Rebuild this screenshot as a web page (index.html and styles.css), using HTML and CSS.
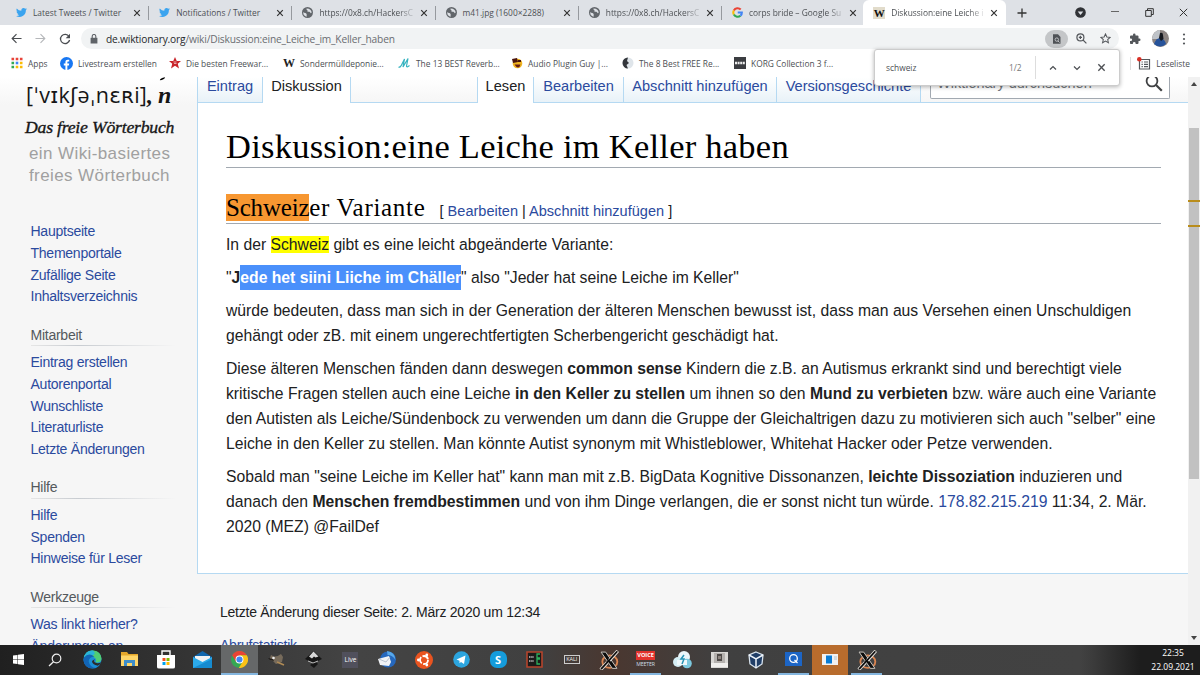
FILE: index.html
```html
<!DOCTYPE html>
<html lang="de">
<head>
<meta charset="utf-8">
<title>Diskussion:eine Leiche im Keller haben</title>
<link rel="stylesheet" href="styles.css">
</head>
<body>
<svg class="defs" width="0" height="0">
  <symbol id="bird" viewBox="0 0 24 24"><path fill="#3ba4ef" d="M24 4.6a10 10 0 0 1-2.8.8 5 5 0 0 0 2.1-2.7 10 10 0 0 1-3.1 1.2 4.9 4.9 0 0 0-8.4 4.5A14 14 0 0 1 1.7 3.2a4.9 4.9 0 0 0 1.5 6.5 5 5 0 0 1-2.2-.6 4.9 4.9 0 0 0 3.9 4.9 5 5 0 0 1-2.2.1 4.9 4.9 0 0 0 4.6 3.4A9.900 9.900 0 0 1 0 19.500 14 14 0 0 0 21.500 7a10 10 0 0 0 2.500-2.400z"/></symbol>
  <symbol id="globe" viewBox="0 0 24 24"><circle cx="12" cy="12" r="12" fill="#62666b"/><path fill="#dee1e6" d="M3 11c2 3 6 1 7 4s-1 4 1 6c-5 0-9-4-8-10zM10 3c-1 3 1 3 2 4s-2 2 0 3 5-1 6 2 2 1 3 0c0-5-4-9-11-9z"/></symbol>
  <symbol id="x" viewBox="0 0 10 10"><path d="M1.500 1.500l7 7M8.500 1.500l-7 7" fill="none" stroke="currentColor" stroke-width="1.500"/></symbol>
  <symbol id="xorg" viewBox="0 0 24 24"><ellipse cx="13" cy="14" rx="9" ry="7.500" fill="none" stroke="#d98450" stroke-width="2.200"/><path d="M2.500 2.500h5.500L21.500 22H16z" fill="#0c0c0c" stroke="#c8c4be" stroke-width="1.200"/><path d="M22.500 1L12.500 12.500M10 15L2 23.500" stroke="#e6e2dc" stroke-width="4"/><path d="M22 1.500L2.500 23" stroke="#0c0c0c" stroke-width="2"/></symbol>
</svg>

<header class="tabstrip">
  <div class="tab"><svg class="fav"><use href="#bird"/></svg><span class="t1">Latest Tweets / Twitter</span><svg class="close"><use href="#x"/></svg></div>
  <div class="tab"><svg class="fav"><use href="#bird"/></svg><span>Notifications / Twitter</span><svg class="close"><use href="#x"/></svg></div>
  <div class="tab"><svg class="fav"><use href="#globe"/></svg><span class="fade">https://0x8.ch/HackersC</span><svg class="close"><use href="#x"/></svg></div>
  <div class="tab"><svg class="fav"><use href="#globe"/></svg><span>m41.jpg (1600×2288)</span><svg class="close"><use href="#x"/></svg></div>
  <div class="tab"><svg class="fav"><use href="#globe"/></svg><span class="fade">https://0x8.ch/HackersC</span><svg class="close"><use href="#x"/></svg></div>
  <div class="tab last"><svg class="fav" viewBox="0 0 24 24"><g fill="none" stroke-width="4.500"><path d="M19 5.500A9.500 9.500 0 0 0 4 7.500" stroke="#ea4335"/><path d="M4 7.500a9.500 9.500 0 0 0 0 9" stroke="#fbbc05"/><path d="M4 16.500a9.500 9.500 0 0 0 14.500 2.500" stroke="#34a853"/><path d="M18.500 19a9 9 0 0 0 3-7h-9" stroke="#4285f4"/></g></svg><span class="fade">corps bride – Google Su</span><svg class="close"><use href="#x"/></svg></div>
  <div class="tab active"><b class="wfav">W</b><span class="fade">Diskussion:eine Leiche i</span><svg class="close"><use href="#x"/></svg></div>
  <svg class="plus" viewBox="0 0 10 10"><path d="M5 .5v9M.5 5h9" stroke="#333" stroke-width="1.300"/></svg>
  <div class="wincontrols">
    <svg width="11" height="11" viewBox="0 0 12 12"><circle cx="6" cy="6" r="5.800" fill="#303236"/><path d="M3 4.800h6L6 8.600z" fill="#dee1e6"/></svg>
    <svg width="9" height="11" viewBox="0 0 9 11"><path d="M0 4.500h8" stroke="#666"/></svg>
    <svg width="9" height="9" viewBox="0 0 9 9"><path d="M.7 2.500h5.600v5.800H.7zM2.500 2.500V.7h5.800v5.800h-2" fill="none" stroke="#333"/></svg>
    <svg width="9" height="9" viewBox="0 0 9 9"><path d="M.8.8l7.400 7.400M8.200.8L.8 8.200" stroke="#333"/></svg>
  </div>
</header>

<div class="toolbar">
  <div class="navbtns">
    <svg width="11" height="11" viewBox="0 0 12 12"><path d="M11.500 6H1.500M6 1.300L1.300 6 6 10.700" fill="none" stroke="#4a4d51" stroke-width="1.300"/></svg>
    <svg width="11" height="11" viewBox="0 0 12 12"><path d="M.5 6h10M6 1.300L10.700 6 6 10.700" fill="none" stroke="#b5b7ba" stroke-width="1.200"/></svg>
    <svg width="12" height="12" viewBox="0 0 12 12"><path d="M10 3.500A4.600 4.600 0 1 0 10.600 7" fill="none" stroke="#4a4d51" stroke-width="1.300"/><path d="M11 .8v4.400H6.700z" fill="#4a4d51"/></svg>
  </div>
  <div class="omnibox">
    <svg width="8" height="10" viewBox="0 0 8 10"><path d="M.6 3.800h6.800V9.500H.6z" fill="#5f6368"/><path d="M2.200 4V2.300a1.800 1.800 0 0 1 3.600 0V4" fill="none" stroke="#5f6368" stroke-width="1.100"/></svg>
    <span class="url"><b>de.wiktionary.org</b>/wiki/Diskussion:eine_Leiche_im_Keller_haben</span>
    <div class="omniicons">
      <i class="findpill"><svg width="9" height="10" viewBox="0 0 9 10"><path d="M1 .3h5L8.500 3v6.700H1z" fill="#4f5256"/><circle cx="4.800" cy="5.600" r="1.700" fill="none" stroke="#bdbfc2"/><path d="M6 7l1.500 1.500" stroke="#bdbfc2"/></svg></i>
      <svg width="11" height="11" viewBox="0 0 11 11"><g fill="none" stroke="#55585c" stroke-width="1.200"><circle cx="4.400" cy="4.400" r="3.500"/><path d="M7 7l3.400 3.400M2.800 4.400H6M4.400 2.800V6"/></g></svg>
      <svg width="11" height="11" viewBox="0 0 12 12"><path d="M6 1l1.500 3.300 3.600.4-2.700 2.400.8 3.600L6 8.900l-3.200 1.800.8-3.600L.9 4.700l3.600-.4z" fill="none" stroke="#55585c" stroke-width="1.100"/></svg>
    </div>
  </div>
  <svg class="puzzle" width="12" height="12" viewBox="0 0 24 24"><path fill="#54575b" d="M20.500 11H19V7a2 2 0 0 0-2-2h-4V3.500a2.500 2.500 0 0 0-5 0V5H4a2 2 0 0 0-2 2v3.800h1.500a2.700 2.700 0 0 1 0 5.400H2V20c0 1.100.9 2 2 2h3.800v-1.500a2.700 2.700 0 0 1 5.400 0V22H17a2 2 0 0 0 2-2v-4h1.500a2.500 2.500 0 0 0 0-5z"/></svg>
  <svg class="avatar" width="17" height="17" viewBox="0 0 17 17"><circle cx="8.500" cy="8.500" r="8.500" fill="#8d8582"/><path d="M1 5Q4 0 8 0v9H0z" fill="#bfc3c8"/><path d="M2 14q2-6 6-6 5 1 6 6-6 5-12 0z" fill="#27539a"/><path d="M8 3q3-1 3 2l.5 4-2.500 2-2-3z" fill="#17191f"/></svg>
  <svg class="dots" width="4" height="12" viewBox="0 0 4 12"><g fill="#54575b"><circle cx="2" cy="1.500" r="1.100"/><circle cx="2" cy="6" r="1.100"/><circle cx="2" cy="10.500" r="1.100"/></g></svg>
</div>

<nav class="bookmarks">
  <a class="k1"><svg width="12" height="12" viewBox="0 0 12 12"><path d="M.5.700h2.600v2.600H.5zM4.700.700h2.600v2.600H4.700zM8.900.700h2.600v2.600H8.900z" fill="#e8443a"/><path d="M.5 4.700h2.600v2.600H.5zM.5 8.700h2.600v2.600H.5z" fill="#34a853"/><path d="M4.700 4.700h2.600v2.600H4.700z" fill="#4285f4"/><path d="M8.900 4.700h2.600v2.600H8.900zM4.700 8.700h2.600v2.600H4.700zM8.900 8.700h2.600v2.600H8.900z" fill="#fbbc05"/></svg>Apps</a>
  <a class="k2"><svg width="13" height="13" viewBox="0 0 24 24"><circle cx="12" cy="12" r="12" fill="#1877f2"/><path fill="#fff" d="M10 24v-8.500H7V12h3V9.400C10 6.400 11.800 5 14.300 5l2.700.2v3h-1.500c-1.500 0-1.900.8-1.900 1.700V12H17l-.6 3.500h-2.800V24z"/></svg>Livestream erstellen</a>
  <a class="k3"><svg width="12" height="12" viewBox="0 0 24 24"><path fill="#c9252b" d="M12 0l3.500 8H24l-6.500 5.500L20 23l-8-5.500L4 23l2.500-9.500L0 8h8.500z"/><path d="M9 10h6M10 13h5" stroke="#fff" stroke-width="1.200"/></svg>Die besten Freewar...</a>
  <a class="k4"><b class="serifw">W</b>Sondermülldeponie...</a>
  <a class="k5"><svg width="13" height="13" viewBox="0 0 13 13"><path d="M.5 10q2 1 4-4l2-4-1.500 8L10 1.500 8.500 9q0 2 3-.5" fill="none" stroke="#37b3c0" stroke-width="1.200"/></svg>The 13 BEST Reverb...</a>
  <a class="k6"><svg width="12" height="12" viewBox="0 0 12 12"><circle cx="6.500" cy="6.500" r="4.800" fill="#efb321"/><path d="M1 2l5-1 1 4-5 1zM7 3h3v2H7z" fill="#4a150d"/><path d="M3.500 7.500h6q-1 4-4 2.500z" fill="#681c14"/></svg>Audio Plugin Guy |...</a>
  <a class="k7"><svg width="12" height="12" viewBox="0 0 12 12"><circle cx="6" cy="6" r="5.500" fill="#dfe5ea"/><path d="M6 .5a5.500 5.500 0 0 0 0 11L4.500 8 7 6 5 4z" fill="#33363b"/></svg>The 8 Best FREE Re...</a>
  <a class="k8"><svg width="12" height="12" viewBox="0 0 12 12"><path d="M0 0h12v12H0z" fill="#3b3d41"/><path d="M1 6h10" stroke="#eee" stroke-width="2.400" stroke-dasharray="2 .6"/></svg>KORG Collection 3 f...</a>
  <a class="reading"><svg width="14" height="13" viewBox="0 0 14 13"><path d="M2.500 2.500h10v9.500h-10z" fill="none" stroke="#55585c" stroke-width="1.200"/><path d="M4.500 5h1.300M7 5h4M4.500 7.300h1.300M7 7.300h4M4.500 9.600h1.300M7 9.600h4" stroke="#55585c" stroke-width="1.200"/><circle cx="2.300" cy="2.300" r="2.300" fill="#d93025"/></svg>Leseliste</a>
</nav>

<main class="page">
  <aside class="side">
    <div class="logo">
      <svg class="stroke" width="7" height="4" viewBox="0 0 8 4"><path d="M1 3.500Q1 1 7 0 6 3 1 3.500z"/></svg>
      <div class="ipa">[ˈvɪkʃəˌnɛʀi]<i>, n</i></div>
      <div class="motto">Das freie Wörterbuch</div>
      <div class="sub">ein Wiki-basiertes<br><span>freies Wörterbuch</span></div>
    </div>
    <ul class="first"><li>Hauptseite</li><li>Themenportale</li><li>Zufällige Seite</li><li>Inhaltsverzeichnis</li></ul>
    <h3>Mitarbeit</h3>
    <ul><li>Eintrag erstellen</li><li>Autorenportal</li><li>Wunschliste</li><li>Literaturliste</li><li>Letzte Änderungen</li></ul>
    <h3>Hilfe</h3>
    <ul><li>Hilfe</li><li>Spenden</li><li>Hinweise für Leser</li></ul>
    <h3>Werkzeuge</h3>
    <ul><li>Was linkt hierher?</li><li>Änderungen an</li></ul>
  </aside>
  <section class="main">
    <div class="ptabs">
      <div class="pt w1">Eintrag</div><div class="pt on w2">Diskussion</div><div class="gap"></div>
      <div class="pt on w3">Lesen</div><div class="pt w4">Bearbeiten</div><div class="pt w5">Abschnitt hinzufügen</div><div class="pt w6">Versionsgeschichte</div>
      <div class="searcharea"><div class="search"><span>Wiktionary durchsuchen</span><svg width="18" height="18" viewBox="0 0 18 18"><circle cx="7" cy="7" r="5.400" fill="none" stroke="#404244" stroke-width="1.800"/><path d="M11 11l5.800 5.800" stroke="#404244" stroke-width="2.200"/></svg></div></div>
    </div>
    <article class="content">
      <h1>Diskussion:eine Leiche im Keller haben</h1>
      <h2><span class="head"><mark class="cur">Schweiz</mark>er Variante</span><span class="edit">[ <a>Bearbeiten</a> | <a>Abschnitt hinzufügen</a> ]</span></h2>
      <p>In der <mark>Schweiz</mark> gibt es eine leicht abgeänderte Variante:</p>
      <p>"<b>J<span class="sel">ede het siini Liiche im Chäller</span></b>" also "Jeder hat seine Leiche im Keller"</p>
      <p>würde bedeuten, dass man sich in der Generation der älteren Menschen bewusst ist, dass man aus Versehen einen Unschuldigen<br>gehängt oder zB. mit einem ungerechtfertigten Scherbengericht geschädigt hat.</p>
      <p>Diese älteren Menschen fänden dann deswegen <b>common sense</b> Kindern die z.B. an Autismus erkrankt sind und berechtigt viele<br>kritische Fragen stellen auch eine Leiche <b>in den Keller zu stellen</b> um ihnen so den <b>Mund zu verbieten</b> bzw. wäre auch eine Variante<br>den Autisten als Leiche/Sündenbock zu verwenden um dann die Gruppe der Gleichaltrigen dazu zu motivieren sich auch "selber" eine<br>Leiche in den Keller zu stellen. Man könnte Autist synonym mit Whistleblower, Whitehat Hacker oder Petze verwenden.</p>
      <p>Sobald man "seine Leiche im Keller hat" kann man mit z.B. BigData Kognitive Dissonanzen, <b>leichte Dissoziation</b> induzieren und<br>danach den <b>Menschen fremdbestimmen</b> und von ihm Dinge verlangen, die er sonst nicht tun würde. <a>178.82.215.219</a> 11:34, 2. Mär.<br>2020 (MEZ) @FailDef</p>
    </article>
    <footer>Letzte Änderung dieser Seite: 2. März 2020 um 12:34<a>Abrufstatistik</a></footer>
  </section>
  <div class="scroll">
    <svg width="6" height="4" viewBox="0 0 6 4"><path d="M0 4l3-4 3 4z" fill="#444"/></svg>
    <div class="thumb"><i></i><i></i></div>
    <svg width="6" height="4" viewBox="0 0 6 4"><path d="M0 0l3 4 3-4z" fill="#444"/></svg>
  </div>
</main>

<div class="find">
  <span class="q">schweiz</span><span class="count">1/2</span>
  <svg width="8" height="8" viewBox="0 0 8 8"><path d="M1 5.500l3-3 3 3" fill="none" stroke="#4a4d51" stroke-width="1.200"/></svg>
  <svg width="8" height="8" viewBox="0 0 8 8"><path d="M1 2.500l3 3 3-3" fill="none" stroke="#4a4d51" stroke-width="1.200"/></svg>
  <svg width="9" height="9"><use href="#x"/></svg>
</div>

<div class="taskbar">
  <div class="apps">
    <i><svg width="11" height="11" viewBox="0 0 11 11"><path fill="#fff" d="M0 1.500l4.500-.6v4.300H0zM5 .8l6-.8v5.200H5zM0 5.800h4.500v4.300L0 9.500zM5 5.800h6V11l-6-.8z"/></svg></i>
    <i><svg width="14" height="14" viewBox="0 0 14 14"><circle cx="8.500" cy="5.500" r="4.300" fill="none" stroke="#eee" stroke-width="1.200"/><path d="M5.500 8.700L1 13" stroke="#eee" stroke-width="1.300"/></svg></i>
    <i><svg width="19" height="19" viewBox="0 0 20 20"><circle cx="10" cy="10" r="9.500" fill="#1b8fd6"/><path d="M1 8Q3 0 11 .500q8 1 8.500 8.500-.5 5-6.500 4 2-3-1-5-5-3-11 0z" fill="#4fce75"/><path d="M1 8Q3 0 10 .5q4 2 1 5-6-1-10 2.500z" fill="#2ab5d9"/><path d="M1 8q5-6 11-1-6 0-6 5 1 6 8 7Q2 21 .500 11z" fill="#1265b6"/><path d="M12.500 9.500q-2 3 1 4 3 1 6-1-1 3-4 4-6-1-6-5z" fill="#2b2b2c"/></svg></i>
    <i><svg width="17" height="15" viewBox="0 0 17 15"><path d="M0 0h6l1.500 2H17v12H0z" fill="#e5a72b"/><path d="M0 3.500h17V14H0z" fill="#ffd669"/><path d="M3 8h11v6h-3v-3H6v3H3z" fill="#3f8ec9"/></svg></i>
    <i><svg width="18" height="19" viewBox="0 0 18 19"><path d="M5 6V1h8v5" fill="none" stroke="#fff" stroke-width="1.400"/><path d="M0 5h18v12q0 1.500-2 1.500H2Q0 18.500 0 17z" fill="#fff"/><path d="M5.500 8h3v3h-3z" fill="#f25022"/><path d="M9.500 8h3v3h-3z" fill="#7fba00"/><path d="M5.500 12h3v3h-3z" fill="#00a4ef"/><path d="M9.500 12h3v3h-3z" fill="#ffb900"/></svg></i>
    <i><svg width="19" height="17" viewBox="0 0 19 17"><path d="M0 6l9.500-6L19 6v11H0z" fill="#1267ad"/><path d="M2 5h15v6H2z" fill="#f2f2f2"/><path d="M0 6l9.500 5L19 6v11H0z" fill="#2caaea"/><path d="M0 17l19-9v9z" fill="#168bd0"/></svg></i>
    <i class="focus"><svg width="17" height="17" viewBox="0 0 24 24"><circle cx="12" cy="12" r="12" fill="#34a853"/><path d="M1.600 6A12 12 0 0 1 22.400 6H12v6z" fill="#ea4335"/><path d="M22.400 6A12 12 0 0 1 11 24l6-10-5-8z" fill="#fbc116"/><path d="M1.600 6L7 15l5-9z" fill="#ea4335"/><circle cx="12" cy="12" r="5.600" fill="#fff"/><circle cx="12" cy="12" r="4.300" fill="#4285f4"/></svg></i>
    <i><svg width="18" height="14" viewBox="0 0 18 14"><path d="M2 5l1-3 3 1.500Q9 4 13 1l2 3-1 5-6 2-3-3-3-1z" fill="#776b5b"/><path d="M0 5l5 1 1 2-4-1z" fill="#1e1a17"/><circle cx="5.500" cy="5" r="1.300" fill="#eee"/><path d="M9 9l7 3" stroke="#b08b55" stroke-width="1.500"/></svg></i>
    <i><svg width="17" height="17" viewBox="0 0 17 17"><path d="M8.500 0L17 8l-6 3 2 2-4 4-4-3 3-2-8-4z" fill="#161616"/><path d="M8.500 .5l5 5-3 1-1.500-1-2 2-3-2z" fill="#d8d8d8"/><path d="M3 10l5 2 5-2" stroke="#bbb" fill="none"/></svg></i>
    <i><span class="live">Live</span></i>
    <i><svg width="18" height="17" viewBox="0 0 18 17"><circle cx="10" cy="8.500" r="8" fill="#2668bd"/><path d="M9 0q8 1 8.500 9-3-5-8-5z" fill="#58a9eb"/><path d="M0 8l11-3 2 6-2 4-9-1z" fill="#f1f3f6"/><path d="M1 8l7 3 4-5" fill="none" stroke="#bbc4d0"/></svg></i>
    <i><svg width="18" height="18" viewBox="0 0 18 18"><circle cx="9" cy="9" r="9" fill="#e95420"/><circle cx="9" cy="9" r="4" fill="none" stroke="#fff" stroke-width="1.800" stroke-dasharray="7 1.400"/><g fill="#fff"><circle cx="3.400" cy="9" r="1.400"/><circle cx="11.800" cy="4" r="1.400"/><circle cx="11.800" cy="14" r="1.400"/></g></svg></i>
    <i><svg width="17" height="17" viewBox="0 0 17 17"><circle cx="8.500" cy="8.500" r="8.300" fill="#2ca5df"/><path d="M3.500 8.500l9-4-1.500 8.500-3-2-1.500 1.300V9.700z" fill="#fff"/></svg></i>
    <i><span class="skype">S</span></i>
    <i><svg width="17" height="17" viewBox="0 0 17 17"><path d="M1 1h15v15H1z" fill="#1b1b1a" stroke="#b5442c" stroke-width="1.600"/><path d="M3 6h5M3 10h5" stroke="#999" stroke-dasharray="1.500 .7" stroke-width="2"/><path d="M14 3h-3v4h3M14 8h-3v5h3" fill="none" stroke="#2fae5c" stroke-width="1.300"/></svg></i>
    <i><span class="kali">KALI</span></i>
    <i><svg width="20" height="20"><use href="#xorg"/></svg></i>
    <i class="open"><span class="vm"><b>VOICE</b><em>MEETER</em></span></i>
    <i><svg width="19" height="18" viewBox="0 0 19 18"><circle cx="11" cy="6" r="6" fill="#eaf6fa"/><circle cx="5" cy="11" r="5" fill="#d4edf4"/><circle cx="14" cy="12.500" r="4.800" fill="#7cc8de"/><path d="M4 9h10v5H4z" fill="#eef8fb"/><path d="M11 4L8 8h3l-2 5" fill="none" stroke="#2592b4" stroke-width="1.500"/></svg></i>
    <i><svg width="17" height="16" viewBox="0 0 17 16"><path d="M0 0h17v16H0z" fill="#d9d8d5"/><path d="M3 1h11v10H3z" fill="#b5b2af"/><path d="M6 2h5v7H6z" fill="#4e4a48"/><path d="M7 4h3v3H7z" fill="#8d8580"/><path d="M0 11h17v4H0z" fill="#f0efed"/></svg></i>
    <i><svg width="16" height="18" viewBox="0 0 16 18"><path d="M8 1l7 3-1 9-6 4-6-4-1-9z" fill="#203e67" stroke="#d9e4ee" stroke-width="1.300"/><path d="M1 4l7 4 7-4M8 8v9" fill="none" stroke="#eef4fa" stroke-width="1.500"/></svg></i>
    <i class="open"><svg width="17" height="16" viewBox="0 0 17 16"><path d="M0 0h17v14H0z" fill="#1c65c6"/><circle cx="8.500" cy="6.500" r="3.800" fill="none" stroke="#fff" stroke-width="1.300"/><path d="M9.500 8l3 3" stroke="#fff" stroke-width="1.300"/></svg></i>
    <i class="orange"><svg width="16" height="11" viewBox="0 0 16 11"><path d="M0 0h16v11H0z" fill="#f1f1f1"/><path d="M4 1.500h6v8H4z" fill="#087bd4"/><path d="M12 3h3M12 5h3" stroke="#b4c3ce"/></svg></i>
    <i class="open"><svg width="20" height="20"><use href="#xorg"/></svg></i>
  </div>
  <div class="clock">22:35<br>22.09.2021</div>
</div>
</body>
</html>
```
FILE: styles.css
```css
* { box-sizing: border-box; }
body { margin: 0; width: 1200px; height: 675px; overflow: hidden; display: flex; flex-direction: column; background: #fff; font-family: "Open Sans", "Noto Sans", sans-serif; font-size: 8.400px; color: #4d5054; position: relative; }
svg { flex: none; display: block; }
.defs { position: absolute; }
i { font-style: normal; }

/* browser tabs */
.tabstrip { height: 25px; flex: none; background: #dee1e6; display: flex; align-items: center; padding-left: 6px; }
.tab { width: 143.2px; height: 25px; display: flex; align-items: center; padding: 0 8px 0 10px; flex: none; position: relative; }
.tab::after { content: ""; position: absolute; right: 0; top: 6px; width: 1px; height: 14px; background: #96999e; }
.tab.last::after, .tab.active::after { display: none; }
.tab span { flex: 1; margin-left: 6px; white-space: nowrap; }
.fade { -webkit-mask-image: linear-gradient(90deg, #000 82%, rgba(0,0,0,.1) 100%); mask-image: linear-gradient(90deg, #000 82%, rgba(0,0,0,.1) 100%); }
.fav { width: 11px; height: 11px; }
.close { width: 8px; height: 8px; color: #333; margin-left: 5px; }
.active { background: #fff; border-radius: 6px 6px 0 0; margin-left: -2px; }
.wfav { width: 12px; height: 12px; background: #e2dccb; color: #111; font: bold 11px/12px "Liberation Serif", serif; text-align: center; }
.plus { width: 10px; height: 10px; margin-left: 11px; }
.wincontrols { margin-left: auto; display: flex; align-items: center; padding-right: 12px; gap: 25px; }

/* toolbar */
.toolbar { height: 27px; flex: none; display: flex; align-items: center; padding-right: 14px; }
.navbtns { width: 81px; display: flex; gap: 13px; padding-left: 11px; flex: none; align-items: center; }
.omnibox { width: 1038px; height: 21px; border-radius: 11px; background: #f1f3f4; display: flex; align-items: center; padding: 0 8px 0 9px; flex: none; }
.url { margin-left: 8px; font-size: 10.200px; letter-spacing: -.18px; color: #6a6d71; white-space: nowrap; }
.url b { font-weight: 400; color: #25272a; }
.omniicons { margin-left: auto; display: flex; align-items: center; gap: 13px; }
.findpill { width: 23px; height: 18px; border-radius: 9px; background: #c4c6c8; display: flex; align-items: center; justify-content: center; margin-right: -5px; }
.puzzle { margin-left: 10px; }
.avatar { margin-left: 11px; }
.dots { margin-left: auto; }

/* bookmarks */
.bookmarks { height: 25px; flex: none; display: flex; align-items: center; padding: 0 10px 3px 11px; white-space: nowrap; }
.bookmarks a { display: flex; align-items: center; gap: 5px; flex: none; }
.k1 { width: 49px; }
.k2 { width: 109px; }
.k3 { width: 114px; }
.k4 { width: 115px; }
.k5 { width: 113px; }
.k6 { width: 111px; }
.k7 { width: 112px; }
.serifw { font: bold 12px/12px "Liberation Serif", serif; color: #222; }
.bookmarks .reading { margin-left: auto; border-left: 1px solid #ddd; padding-left: 6px; }

/* page */
.page { height: 568px; flex: none; display: flex; background: #f6f6f6; overflow: hidden; font-family: "Liberation Sans", Arial, sans-serif; color: #202122; }
.side { width: 197px; flex: none; background: linear-gradient(#fff, #f6f6f6 28px); padding-left: 25px; font-size: 14.050px; letter-spacing: -.27px; }
.logo { height: 144px; color: #161616; white-space: nowrap; position: relative; }
.stroke { position: absolute; left: 134px; top: 0; }
.ipa { font: 21.500px/24px "Open Sans", "DejaVu Sans", sans-serif; padding: 6px 0 0 1px; letter-spacing: .2px; }
.ipa i { font: italic bold 24px/20px "Liberation Serif", serif; letter-spacing: 0; word-spacing: -1px; }
.motto { font: italic 17.700px/22px "Liberation Serif", serif; letter-spacing: -.22px; -webkit-text-stroke: .35px #161616; margin-top: 9px; }
.sub { font-size: 17px; line-height: 21.500px; color: #a0a0a0; padding-left: 4px; margin-top: 5px; letter-spacing: .4px; }
.side ul { list-style: none; margin: 0; padding: 0 0 0 5.500px; color: #2b4a9e; line-height: 21.750px; }
.side h3 { margin: 15.500px 0 6px 5.500px; width: 144px; height: 22.500px; font-size: 14.050px; font-weight: 400; line-height: 22px; color: #54595d; border-bottom: 1px solid; border-image: linear-gradient(90deg, #e6e6e6, #c8ccd1 33%, #f6f6f6) 1; }
.main { width: 991px; flex: none; }
.ptabs { height: 26px; display: flex; background: linear-gradient(#fff, #f6f6f6); border-bottom: 1px solid #b5d9f2; border-left: 1px solid #b5d9f2; }
.pt { height: 25px; font-size: 14.600px; line-height: 19px; text-align: center; color: #2b4a9e; border-right: 1px solid #b5d9f2; background: linear-gradient(#fff, #e8f2f8); white-space: nowrap; flex: none; }
.pt.on { height: 26px; background: #fff; color: #202122; }
.w1 { width: 65px; }
.w2 { width: 88px; }
.gap { width: 127px; flex: none; border-right: 1px solid #b5d9f2; }
.w3 { width: 56px; }
.w4 { width: 90px; }
.w5 { width: 153px; }
.w6 { width: 144px; }
.searcharea { flex: 1; padding: 0 18px 0 9px; }
.search { height: 22px; border: 1px solid #a2a9b1; border-top: 0; border-radius: 0 0 2px 2px; background: #fff; display: flex; justify-content: space-between; padding: 0 6px; font-size: 14.500px; line-height: 13px; color: #72777d; }
.search svg { margin-top: -3px; }
.content { height: 471px; background: #fff; border-left: 1px solid #b5d9f2; border-bottom: 1px solid #b5d9f2; padding: 0 27px 0 28px; font-size: 15.715px; line-height: 25px; white-space: nowrap; }
h1 { margin: 0; padding-top: 21px; height: 65px; border-bottom: 1px solid #a2a9b1; font: 400 34.500px/44px "Liberation Serif", serif; color: #000; letter-spacing: .24px; }
h2 { margin: 24px 0 0; height: 32px; border-bottom: 1px solid #a2a9b1; font-weight: 400; display: flex; align-items: baseline; }
.head { font: 25px/32px "Liberation Serif", serif; color: #000; letter-spacing: .7px; }
.edit { font-size: 14.550px; margin-left: 14px; line-height: 26px; }
mark { background: #ff0; color: inherit; }
mark.cur { background: #f79731; letter-spacing: -.2px; }
.sel { background: #4a90fb; color: #fff; padding: 4px 0; }
.content p { margin: 0 0 7.900px; }
.content h2 + p { margin-top: 8px; }
a { color: #2b4a9e; }
.bookmarks a { color: inherit; }
footer { padding: 26px 0 0 23px; font-size: 14px; letter-spacing: -.24px; line-height: 24px; }
footer a { display: block; margin-top: 9px; }
.scroll { width: 12px; background: #f1f1f1; display: flex; flex-direction: column; align-items: center; padding: 5px 0; }
.thumb { width: 10px; height: 351px; background: #c1c1c1; margin: 42px 0 auto; display: flex; flex-direction: column; padding-top: 72px; gap: 23px; align-items: center; }
.thumb i { width: 12px; height: 2px; background: #b98d1c; }

/* find bar floats above the page */
.find { position: absolute; left: 874px; top: 49px; width: 246px; height: 37px; background: #fff; border: 1px solid #ccc; border-radius: 3px; box-shadow: 0 1px 4px rgba(0,0,0,.3); display: flex; align-items: center; padding-left: 11px; gap: 16px; }
.q { width: 107px; }
.count { width: 27px; height: 23px; line-height: 23px; border-right: 1px solid #ddd; color: #777; margin-right: -3px; }

/* taskbar */
.taskbar { height: 30px; flex: none; display: flex; justify-content: space-between; background: linear-gradient(90deg, #202020, #303030 12%, #444 30%, #404040 45%, #4a3730 51%, #404040 60%, #424242 90%, #3c3c3c 91%, #1d1d1d 95%); }
.apps { display: grid; grid-template-columns: repeat(24, 36.900px); }
.apps i { display: flex; align-items: center; justify-content: center; border-bottom: 1px solid transparent; }
.apps .open { border-bottom: 2px solid #84b6df; margin: 0 3px; padding-top: 1px; }
.apps .focus { background: #666869; border-bottom: 2px solid #84b6df; padding-top: 1px; }
.apps .orange { background: #b86c2d; }
.live { width: 16px; height: 16px; background: #50505c; color: #fff; font-size: 6.500px; line-height: 15px; text-align: center; }
.skype { width: 17px; height: 17px; border-radius: 7px; background: #159cdc; color: #fff; font-weight: 700; font-size: 11px; line-height: 17px; text-align: center; }
.kali { width: 16px; border: 1px solid #ccc; color: #eee; font-size: 5.500px; line-height: 7px; text-align: center; }
.vm { width: 19px; font-size: 5.600px; line-height: 9px; text-align: center; color: #cfdbe3; }
.vm b { display: block; background: #e2332d; color: #fff; }
.vm em { display: block; font-style: normal; font-size: 5.200px; line-height: 8px; letter-spacing: -.1px; }
.clock { width: 54px; color: #fff; font-size: 8.500px; line-height: 14px; text-align: center; padding-top: 1px; }
```
